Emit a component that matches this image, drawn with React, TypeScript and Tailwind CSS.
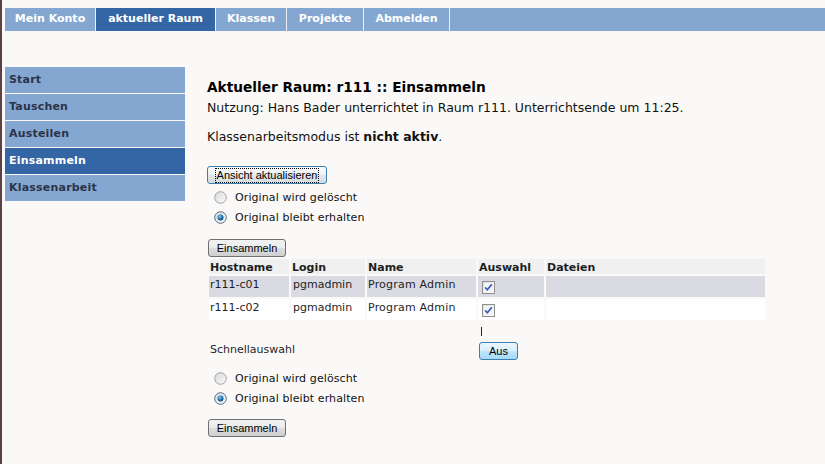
import React from "react";

const btnGray =
  "flex items-center justify-center h-[18px] rounded-[3px] border border-[#707070] bg-[linear-gradient(to_bottom,#f2f2f2_0%,#ebebeb_50%,#dddddd_51%,#cfcfcf_100%)] text-[11px] text-black font-['Liberation_Sans',Arial,sans-serif] leading-none";

function Radio({ checked }: { checked?: boolean }) {
  return (
    <svg width="13" height="13" viewBox="0 0 13 13" className="shrink-0">
      <defs>
        <linearGradient id={checked ? "rgc" : "rgu"} x1="0" y1="0" x2="1" y2="1">
          <stop offset="0" stopColor="#d8d8d8" />
          <stop offset="1" stopColor="#fbfbfb" />
        </linearGradient>
        <radialGradient id="dot" cx="0.4" cy="0.35" r="0.7">
          <stop offset="0" stopColor="#8fd0f5" />
          <stop offset="0.5" stopColor="#2a7ab8" />
          <stop offset="1" stopColor="#0d3f6a" />
        </radialGradient>
      </defs>
      <circle
        cx="6.5"
        cy="6.5"
        r="5.8"
        fill={checked ? "url(#rgc)" : "url(#rgu)"}
        stroke={checked ? "#4d6f8e" : "#a3a3a3"}
        strokeWidth="1"
      />
      {checked && <circle cx="6.5" cy="6.5" r="3" fill="url(#dot)" />}
    </svg>
  );
}

function Check() {
  return (
    <svg width="13" height="13" viewBox="0 0 13 13" className="shrink-0">
      <defs>
        <linearGradient id="cbg" x1="0" y1="0" x2="1" y2="1">
          <stop offset="0" stopColor="#dcdcdc" />
          <stop offset="1" stopColor="#ffffff" />
        </linearGradient>
      </defs>
      <rect x="0.5" y="0.5" width="12" height="12" fill="url(#cbg)" stroke="#8f8f8f" />
      <rect x="2" y="2" width="9" height="9" fill="#f4f4f4" />
      <path d="M3.2 6.4 L5.3 8.8 L9.8 3.4" fill="none" stroke="#3b5fbf" strokeWidth="1.7" />
    </svg>
  );
}

function RadioRow({ checked, label }: { checked?: boolean; label: string }) {
  return (
    <div className="flex h-[20px] items-center pl-[7px]">
      <Radio checked={checked} />
      <span className="ml-[8px] text-[11px] leading-[13px] tracking-[0.1px] text-[#111]">{label}</span>
    </div>
  );
}

const widths = ["w-[80px]", "w-[74px]", "w-[109px]", "w-[66px]", "w-[219px]"];

export default function App() {
  const navItems = [
    { t: "Mein Konto", w: "w-[91px]" },
    { t: "aktueller Raum", w: "w-[120px]", active: true },
    { t: "Klassen", w: "w-[71px]" },
    { t: "Projekte", w: "w-[77px]" },
    { t: "Abmelden", w: "w-[86px]" },
  ];
  const side = ["Start", "Tauschen", "Austeilen", "Einsammeln", "Klassenarbeit"];
  const rows = [
    { h: "r111-c01", bg: "bg-[#dadae2]" },
    { h: "r111-c02", bg: "bg-white" },
  ];

  return (
    <div className="flex min-h-[464px] bg-[#faf9f7] font-['DejaVu_Sans',Verdana,sans-serif]">
      <div className="w-[2px] shrink-0 bg-[#5b4048]" />
      <div className="flex-1 pl-[3px] pt-[8px]">
        {/* top nav */}
        <div className="flex h-[23px] bg-[#84a7d1]">
          {navItems.map((n) => (
            <div
              key={n.t}
              className={`${n.w} flex items-center justify-center border-r border-[#eef2f7] text-[11px] font-bold text-white ${
                n.active ? "bg-[#3465a5]" : ""
              }`}
            >
              {n.t}
            </div>
          ))}
        </div>

        <div className="flex">
          {/* sidebar */}
          <div className="mt-[36px] flex w-[180px] shrink-0 flex-col gap-[1px]">
            {side.map((s) => (
              <div
                key={s}
                className={`flex h-[26px] items-center pl-[4px] text-[11px] font-bold tracking-[0.2px] ${
                  s === "Einsammeln" ? "bg-[#3465a5] text-white" : "bg-[#84a7d1] text-[#2c3348]"
                }`}
              >
                {s}
              </div>
            ))}
          </div>

          {/* main */}
          <div className="ml-[22px] flex flex-col pt-[48px] text-[#111]">
            <div className="h-[17px] text-[13.7px] font-bold leading-[17px] text-black">
              Aktueller Raum: r111 :: Einsammeln
            </div>
            <div className="mt-[4px] h-[16px] text-[12.5px] leading-[16px]">
              Nutzung: Hans Bader unterrichtet in Raum r111. Unterrichtsende um 11:25.
            </div>
            <div className="mt-[13px] h-[16px] text-[12.5px] leading-[16px]">
              Klassenarbeitsmodus ist <b>nicht aktiv</b>.
            </div>

            <div className="mt-[21px] flex">
              <button className="flex h-[18px] w-[120px] items-center justify-center rounded-[3px] border border-[#3c7fb1] bg-[linear-gradient(to_bottom,#f6f8fa_0%,#eef1f4_50%,#e1e5e9_51%,#d6dbe0_100%)] font-['Liberation_Sans',Arial,sans-serif] text-[11px] leading-none text-black">
                <span className="border border-dotted border-black px-[1px] py-[1px]">Ansicht aktualisieren</span>
              </button>
            </div>

            <div className="mt-[3px]">
              <RadioRow label="Original wird gelöscht" />
              <RadioRow checked label="Original bleibt erhalten" />
            </div>

            <div className="mt-[12px] flex">
              <button className={`${btnGray} ml-[1px] w-[78px]`}>Einsammeln</button>
            </div>

            {/* table */}
            <div className="flex flex-col gap-[2px] p-[2px] text-[11px] leading-[13px] text-[#1f1f1f]">
              <div className="flex h-[15px] gap-[2px] font-bold">
                {["Hostname", "Login", "Name", "Auswahl", "Dateien"].map((h, i) => (
                  <div key={h} className={`${widths[i]} bg-[#f0f0f0] pl-[1px] pt-[2px]`}>
                    {h}
                  </div>
                ))}
              </div>
              {rows.map((r) => (
                <div key={r.h} className="flex h-[21px] gap-[2px]">
                  <div className={`${widths[0]} ${r.bg} pl-[1px] pt-[2px]`}>{r.h}</div>
                  <div className={`${widths[1]} ${r.bg} pl-[2px] pt-[2px]`}>pgmadmin</div>
                  <div className={`${widths[2]} ${r.bg} pl-[1px] pt-[2px] tracking-[0.2px]`}>Program Admin</div>
                  <div className={`${widths[3]} ${r.bg} pl-[4px] pt-[5px]`}>
                    <Check />
                  </div>
                  <div className={`${widths[4]} ${r.bg}`} />
                </div>
              ))}
              <div className="flex gap-[2px]">
                <div className="w-[267px] pl-[1px] pt-[21px]">Schnellauswahl</div>
                <div className="flex w-[66px] flex-col pt-[5px]">
                  <div className="ml-[3px] h-[9px] w-[1px] bg-[#222]" />
                  <button className="ml-[1px] mt-[6px] flex h-[18px] w-[39px] items-center justify-center rounded-[3px] border border-[#3c7fb1] bg-[linear-gradient(to_bottom,#eaf6fd_0%,#d9f0fc_50%,#bee6fd_51%,#a7d9f5_100%)] font-['Liberation_Sans',Arial,sans-serif] text-[11px] leading-none text-black">
                    Aus
                  </button>
                </div>
              </div>
            </div>

            <div className="mt-[6px]">
              <RadioRow label="Original wird gelöscht" />
              <RadioRow checked label="Original bleibt erhalten" />
            </div>

            <div className="mt-[11px] flex">
              <button className={`${btnGray} ml-[1px] w-[78px]`}>Einsammeln</button>
            </div>
          </div>
        </div>
      </div>
    </div>
  );
}
